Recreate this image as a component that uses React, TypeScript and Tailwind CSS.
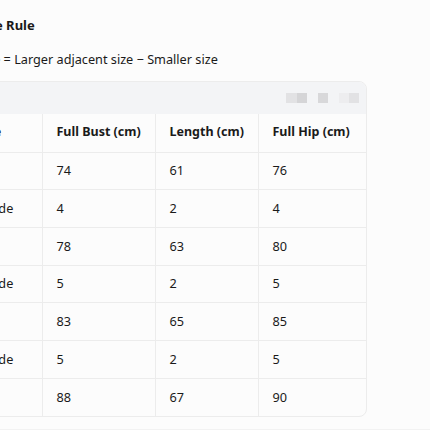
const rows: [string, string, string, string][] = [
  ["S", "74", "61", "76"],
  ["Grade", "4", "2", "4"],
  ["M", "78", "63", "80"],
  ["Grade", "5", "2", "5"],
  ["L", "83", "65", "85"],
  ["Grade", "5", "2", "5"],
  ["XL", "88", "67", "90"],
];

const cols = ["Size", "Full Bust (cm)", "Length (cm)", "Full Hip (cm)"];
const widths = ["w-[79px]", "w-[113px]", "w-[103px]", "w-[109px]"];

export default function App() {
  return (
    <div className="w-[430px] h-[430px] overflow-hidden bg-[#fcfcfc] text-[#1a1a1a] font-['Noto_Sans',sans-serif]">
      <div className="-ml-[38px] w-[405px] pt-[15px]">
        <h3 className="pl-[2px] text-[13px] leading-5 font-bold">Grade Rule</h3>
        <p className="mt-[14px] pl-[2px] text-[12.7px] leading-5">
          Grade = Larger adjacent size − Smaller size
        </p>

        <div className="mt-[12px] rounded-lg border border-[#ececec] overflow-hidden">
          {/* toolbar */}
          <div className="h-8 bg-[#f3f4f6] flex items-center justify-end pr-[7px] gap-[11px]">
            <div className="flex">
              <span className="w-[11px] h-[10px] bg-[#e2e2e4]" />
              <span className="w-[10px] h-[10px] bg-[#d5d5d7]" />
            </div>
            <span className="w-[10px] h-[10px] bg-[#d8d8da]" />
            <div className="flex">
              <span className="w-[10px] h-[10px] bg-[#ededef]" />
              <span className="w-[10px] h-[10px] bg-[#e2e2e4]" />
            </div>
          </div>

          <table className="table-fixed border-collapse text-[12.7px] w-full">
            <thead>
              <tr className="h-[38px] border-b border-[#ececec]">
                {cols.map((c, i) => (
                  <th
                    key={c}
                    className={`${widths[i]} text-left font-bold text-[12.5px] pl-[14px] ${
                      i < 3 ? "border-r border-[#ececec]" : ""
                    }`}
                  >
                    {c}
                  </th>
                ))}
              </tr>
            </thead>
            <tbody>
              {rows.map((r, ri) => (
                <tr
                  key={ri}
                  className={`h-[37.7px] ${
                    ri < rows.length - 1 ? "border-b border-[#ececec]" : ""
                  }`}
                >
                  {r.map((v, i) => (
                    <td
                      key={i}
                      className={`pl-[14px] ${i < 3 ? "border-r border-[#ececec]" : ""}`}
                    >
                      {v}
                    </td>
                  ))}
                </tr>
              ))}
            </tbody>
          </table>
        </div>

        <div className="mt-[12px] h-[4px] w-[500px] bg-[#f2f2f2]" />
      </div>
    </div>
  );
}
